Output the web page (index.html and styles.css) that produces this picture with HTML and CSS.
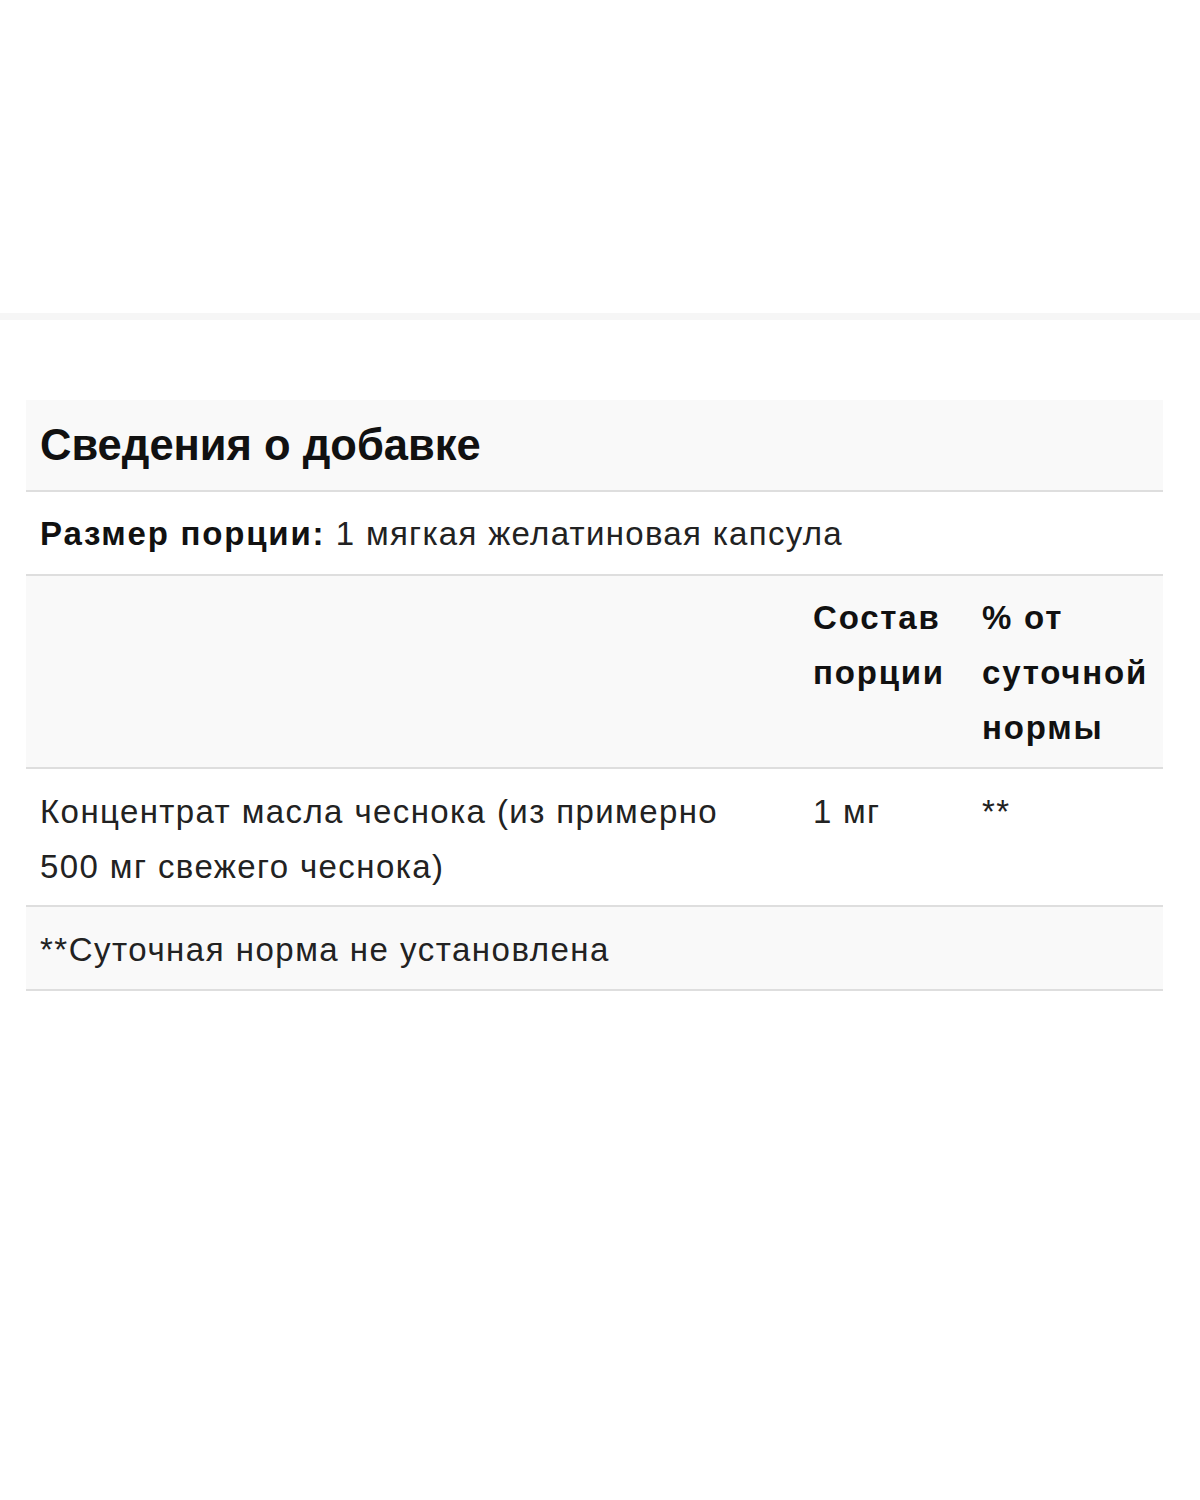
FILE: index.html
```html
<!DOCTYPE html>
<html lang="ru">
<head>
<meta charset="utf-8">
<title>Сведения о добавке</title>
<link rel="stylesheet" href="styles.css">
</head>
<body>
<div class="top"></div>
<div class="band"></div>
<section class="facts">
  <div class="row title-row"><h2 class="title">Сведения о добавке</h2></div>
  <div class="row"><p class="serving"><b>Размер порции:</b> 1 мягкая желатиновая капсула</p></div>
  <div class="row grid head-row shaded">
    <div class="cell"></div>
    <div class="cell head">Состав порции</div>
    <div class="cell head">% от суточной нормы</div>
  </div>
  <div class="row grid body-row">
    <div class="cell name">Концентрат масла чеснока (из примерно 500 мг свежего чеснока)</div>
    <div class="cell">1 мг</div>
    <div class="cell">**</div>
  </div>
  <div class="row shaded"><p class="note">**Суточная норма не установлена</p></div>
</section>
</body>
</html>
```

FILE: styles.css
```css
html, body {
  margin: 0;
  padding: 0;
  background: #fff;
}
body {
  font-family: "Liberation Sans", Arial, sans-serif;
  color: #222;
}
.top {
  height: 313px;
}
.band {
  height: 7px;
  background: #f6f6f6;
}
.facts {
  margin: 80px 37px 0 26px;
}
.row {
  border-bottom: 2px solid #dedede;
  font-size: 33px;
  line-height: 55px;
  letter-spacing: 1.3px;
}
.shaded {
  background: #f9f9f9;
}
.title-row {
  background: #f9f9f9;
  height: 90px;
  display: flex;
  align-items: center;
  padding: 0 14px;
}
.title {
  margin: 0;
  font-size: 43.5px;
  font-weight: bold;
  letter-spacing: 0;
  color: #111;
}
.serving, .note {
  margin: 0;
  padding: 14px 14px 13px;
}
.note {
  padding-top: 15px;
  padding-bottom: 12px;
  letter-spacing: 1.5px;
}
.serving b {
  color: #111;
  letter-spacing: 1.8px;
}
.grid {
  display: grid;
  grid-template-columns: 773px 169px 1fr;
}
.head-row {
  padding: 14px 0 12px;
}
.body-row {
  padding: 15px 0 11px;
}
.cell {
  padding: 0 14px;
}
.name {
  padding-right: 60px;
  letter-spacing: 1.4px;
}
.head {
  font-weight: bold;
  color: #111;
  letter-spacing: 1.8px;
  padding-right: 4px;
}
```
